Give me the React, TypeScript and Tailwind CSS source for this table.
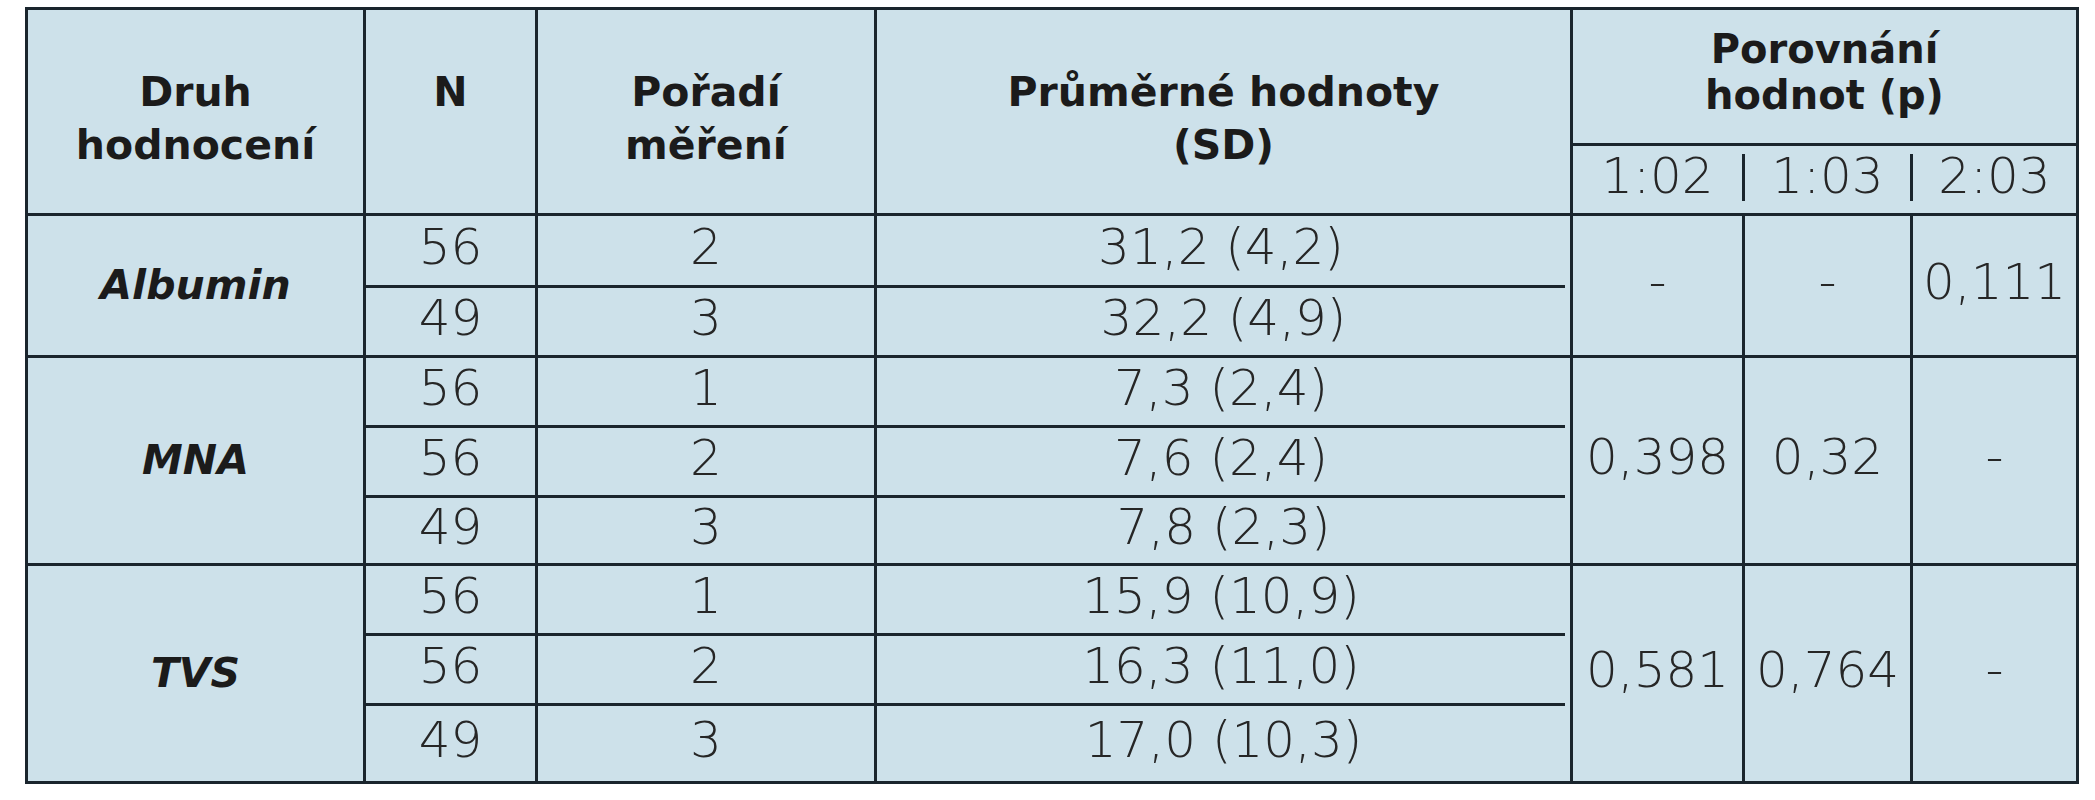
const groups = [
  {
    name: "Albumin",
    rows: [
      { n: "56", order: "2", mean: "31,2 (4,2)" },
      { n: "49", order: "3", mean: "32,2 (4,9)" },
    ],
    p: ["-", "-", "0,111"],
  },
  {
    name: "MNA",
    rows: [
      { n: "56", order: "1", mean: "7,3 (2,4)" },
      { n: "56", order: "2", mean: "7,6 (2,4)" },
      { n: "49", order: "3", mean: "7,8 (2,3)" },
    ],
    p: ["0,398", "0,32", "-"],
  },
  {
    name: "TVS",
    rows: [
      { n: "56", order: "1", mean: "15,9 (10,9)" },
      { n: "56", order: "2", mean: "16,3 (11,0)" },
      { n: "49", order: "3", mean: "17,0 (10,3)" },
    ],
    p: ["0,581", "0,764", "-"],
  },
];

const spans: Record<number, string> = { 2: "row-span-2", 3: "row-span-3" };

const head = "font-['DejaVu_Sans',sans-serif] font-bold text-[41px] text-[#1b1b1b] text-center";
const data = "flex items-center justify-center pb-[8px] font-['DejaVu_Sans',sans-serif] font-extralight text-[50px] leading-none text-[#262626]";

export default function App() {
  return (
    <div className="w-[2095px] h-[800px] bg-white pt-[7px]">
      <div className="ml-[25px] w-[2054px] border-[3px] border-[#1a252d] bg-[#cde1ea]">
        <div className="grid grid-cols-[335px_172px_339px_696px_172px_168px_166px] grid-rows-[136px_70px_72px_70px_70px_70px_68px_70px_70px_75px]">
          {/* header */}
          <div className={`row-span-2 border-b-[3px] border-[#1a252d] pt-[56px] leading-[53px] ${head}`}>
            Druh
            <br />
            hodnocení
          </div>
          <div className={`row-span-2 border-l-[3px] border-b-[3px] border-[#1a252d] pt-[56px] leading-[53px] ${head}`}>N</div>
          <div className={`row-span-2 border-l-[3px] border-b-[3px] border-[#1a252d] pt-[56px] leading-[53px] ${head}`}>
            Pořadí
            <br />
            měření
          </div>
          <div className={`row-span-2 border-l-[3px] border-b-[3px] border-[#1a252d] pt-[56px] leading-[53px] ${head}`}>
            Průměrné hodnoty
            <br />
            (SD)
          </div>
          <div className="col-span-3 border-l-[3px] border-b-[3px] border-[#1a252d] pt-[16px] leading-[46px] font-['DejaVu_Sans',sans-serif] font-bold text-[40px] text-[#1b1b1b] text-center">
            Porovnání
            <br />
            hodnot (p)
          </div>
          <div className={`border-l-[3px] border-b-[3px] border-[#1a252d] ${data}`}>1:02</div>
          <div className="flex border-b-[3px] border-[#1a252d]">
            <div className="w-[3px] mt-[8px] mb-[12px] bg-[#1a252d]" />
            <div className={`flex-1 ${data}`}>1:03</div>
          </div>
          <div className="flex border-b-[3px] border-[#1a252d]">
            <div className="w-[3px] mt-[8px] mb-[12px] bg-[#1a252d]" />
            <div className={`flex-1 ${data}`}>2:03</div>
          </div>

          {/* body */}
          {groups.map((g, gi) => {
            const lastGroup = gi === groups.length - 1;
            return g.rows.map((r, ri) => {
              const lastRow = ri === g.rows.length - 1;
              const bottom = lastGroup && lastRow ? "" : "border-b-[3px]";
              const meanLine = lastRow ? (lastGroup ? "" : "border-b-[3px]") : "border-b-[3px] mr-[5px]";
              return [
                ri === 0 && (
                  <div
                    key={`${g.name}-name`}
                    className={`${spans[g.rows.length]} ${lastGroup ? "" : "border-b-[3px]"} border-[#1a252d] flex items-center justify-center font-['DejaVu_Sans',sans-serif] font-bold italic text-[41px] text-[#1b1b1b]`}
                  >
                    {g.name}
                  </div>
                ),
                <div key={`${g.name}-${ri}-n`} className={`border-l-[3px] ${bottom} border-[#1a252d] ${data}`}>
                  {r.n}
                </div>,
                <div key={`${g.name}-${ri}-o`} className={`border-l-[3px] ${bottom} border-[#1a252d] ${data}`}>
                  {r.order}
                </div>,
                <div key={`${g.name}-${ri}-m`} className={`border-l-[3px] ${meanLine} border-[#1a252d] ${data}`}>
                  {r.mean}
                </div>,
                ...(ri === 0
                  ? g.p.map((v, pi) => (
                      <div
                        key={`${g.name}-p${pi}`}
                        className={`${spans[g.rows.length]} border-l-[3px] ${lastGroup ? "" : "border-b-[3px]"} border-[#1a252d] ${data}`}
                      >
                        {v}
                      </div>
                    ))
                  : []),
              ];
            });
          })}
        </div>
      </div>
    </div>
  );
}
